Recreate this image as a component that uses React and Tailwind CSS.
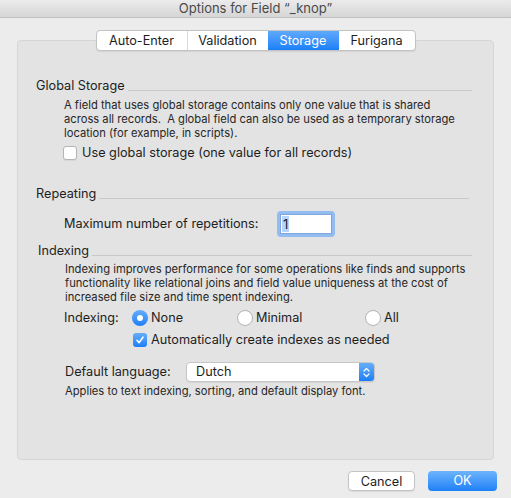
import React from "react";

const font = { fontFamily: "Inter, 'Liberation Sans', sans-serif" };

function SectionHeading({ label, className = "" }) {
  return (
    <div className={`flex items-end pr-[21px] ${className}`}>
      <span className="text-[12.7px] leading-[16px] text-[#1e1e1e]">{label}</span>
      <span className="mb-[3px] ml-[3px] h-px flex-1 bg-[#c8c8c8]" />
    </div>
  );
}

function Checkbox({ checked }) {
  if (checked) {
    return (
      <span className="flex h-[14px] w-[14px] items-center justify-center rounded-[3px] bg-gradient-to-b from-[#64adf9] to-[#1b7ef7]">
        <svg width="10" height="10" viewBox="0 0 10 10">
          <path d="M2 5.3 L4.1 7.6 L8 2.2" fill="none" stroke="white" strokeWidth="1.6" strokeLinecap="round" strokeLinejoin="round" />
        </svg>
      </span>
    );
  }
  return <span className="block h-[14px] w-[14px] rounded-[3px] border border-[#b4b4b4] bg-white shadow-[0_1px_1px_rgba(0,0,0,0.06)]" />;
}

function Radio({ checked }) {
  if (checked) {
    return (
      <span className="flex h-[16px] w-[16px] items-center justify-center rounded-full bg-gradient-to-b from-[#64adf9] to-[#1b7ef7]">
        <span className="h-[6px] w-[6px] rounded-full bg-white" />
      </span>
    );
  }
  return <span className="block h-[16px] w-[16px] rounded-full border border-[#b4b4b4] bg-white" />;
}

const tabs = [
  { label: "Auto-Enter", w: "w-[90px]" },
  { label: "Validation", w: "w-[81px]" },
  { label: "Storage", w: "w-[71px]", active: true },
  { label: "Furigana", w: "w-[76px]" },
];

export default function App() {
  return (
    <div className="flex h-[498px] w-[511px] flex-col bg-[#ececec] text-[#1e1e1e]" style={font}>
      {/* title bar */}
      <div className="flex h-[18px] items-center justify-center border-b border-[#c2c2c2] bg-gradient-to-b from-[#ebebeb] to-[#d6d6d6] text-[13px] text-[#4a4a4a]">
        Options for Field “_knop”
      </div>

      {/* tab strip, sitting over the panel edge */}
      <div className="relative z-10 mt-[12px] flex justify-center">
        <div className="flex h-[21px] overflow-hidden rounded-[4px] border border-[#c3c3c3] bg-white shadow-[0_1px_1px_rgba(0,0,0,0.08)]">
          {tabs.map((t, i) => (
            <div
              key={t.label}
              className={`flex items-center justify-center text-[12.7px] ${t.w} ${
                t.active
                  ? "bg-gradient-to-b from-[#5ea9fb] to-[#1a7ff8] text-white"
                  : "text-[#1e1e1e]"
              } ${i > 0 && !t.active && !tabs[i - 1].active ? "border-l border-[#dadada]" : ""}`}
            >
              {t.label}
            </div>
          ))}
        </div>
      </div>

      {/* panel */}
      <div className="mx-[17px] -mt-[11px] h-[420px] rounded-[4px] border border-[#d6d6d6] bg-[#e3e3e3] pl-[18px]">
        <SectionHeading label="Global Storage" className="mt-[37px]" />
        <p className="mt-[4px] pl-[28px] text-[11.2px] leading-[14px] text-[#262626]">
          A field that uses global storage contains only one value that is shared
          <br />
          across all records.&nbsp; A global field can also be used as a temporary storage
          <br />
          location (for example, in scripts).
        </p>
        <div className="mt-[5px] flex h-[16px] items-center pl-[27px]">
          <Checkbox />
          <span className="ml-[5px] text-[12.7px]">Use global storage (one value for all records)</span>
        </div>

        <SectionHeading label="Repeating" className="mt-[25px] pr-[24px]" />
        <div className="mt-[9px] flex items-center pl-[28px]">
          <span className="w-[213px] text-[12.7px]">Maximum number of repetitions:</span>
          <div className="rounded-[4px] border-[3px] border-[#93bdf0]">
            <div className="flex h-[20px] w-[52px] items-center border border-[#7ea6da] bg-white pl-[1px] text-[13px]">
              <span className="bg-[#b4d5fe] px-[1px] leading-[16px]">1</span>
            </div>
          </div>
        </div>

        <SectionHeading label="Indexing" className="mt-[6px] pl-[2px]" />
        <p className="mt-[3px] pl-[29px] text-[11.2px] leading-[14px] text-[#262626]">
          Indexing improves performance for some operations like finds and supports
          <br />
          functionality like relational joins and field value uniqueness at the cost of
          <br />
          increased file size and time spent indexing.
        </p>
        <div className="mt-[6px] flex h-[16px] items-center pl-[28px] text-[12.7px]">
          <span className="w-[68px]">Indexing:</span>
          <div className="flex w-[105px] items-center">
            <Radio checked />
            <span className="ml-[3px]">None</span>
          </div>
          <div className="flex w-[128px] items-center">
            <Radio />
            <span className="ml-[3px]">Minimal</span>
          </div>
          <div className="flex items-center">
            <Radio />
            <span className="ml-[3px]">All</span>
          </div>
        </div>
        <div className="mt-[6px] flex h-[16px] items-center pl-[97px]">
          <Checkbox checked />
          <span className="ml-[4px] text-[12.7px]">Automatically create indexes as needed</span>
        </div>

        <div className="mt-[14px] flex items-center pl-[29px]">
          <span className="w-[121px] text-[12.7px]">Default language:</span>
          <div className="flex h-[20px] w-[189px] items-center overflow-hidden rounded-[4px] border border-[#c6c6c6] bg-white shadow-[0_1px_1px_rgba(0,0,0,0.06)]">
            <span className="flex-1 pl-[9px] text-[12.7px]">Dutch</span>
            <span className="flex h-full w-[15px] items-center justify-center bg-gradient-to-b from-[#64adf9] to-[#1b7ef7]">
              <svg width="7" height="11" viewBox="0 0 7 11">
                <path d="M1 4 L3.5 1.5 L6 4 M1 7 L3.5 9.5 L6 7" fill="none" stroke="white" strokeWidth="1.2" strokeLinecap="round" strokeLinejoin="round" />
              </svg>
            </span>
          </div>
        </div>
        <p className="mt-[2px] pl-[29px] text-[11.2px] leading-[14px] text-[#262626]">
          Applies to text indexing, sorting, and default display font.
        </p>
      </div>

      {/* dialog buttons */}
      <div className="mt-[11px] flex justify-end gap-[13px] pr-[14px]">
        <button
          type="button"
          className="h-[20px] w-[67px] rounded-[4px] border border-[#c4c4c4] bg-white text-[12.7px] text-[#1e1e1e] shadow-[0_1px_1px_rgba(0,0,0,0.08)]"
        >
          Cancel
        </button>
        <button
          type="button"
          className="h-[20px] w-[69px] rounded-[4px] bg-gradient-to-b from-[#6cb3fa] to-[#1a80f8] text-[12.7px] text-white"
        >
          OK
        </button>
      </div>
    </div>
  );
}
